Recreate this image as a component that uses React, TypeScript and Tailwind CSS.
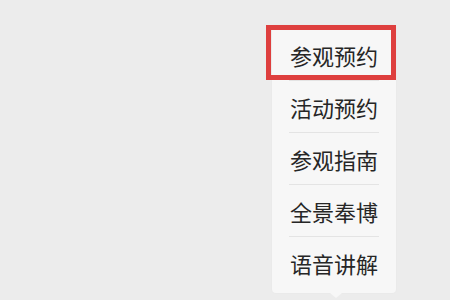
import React from 'react';

const items = ['参观预约', '活动预约', '参观指南', '全景奉博', '语音讲解'];

export default function App() {
  return (
    <div className="w-[450px] h-[300px] bg-[#ececec] flex justify-end pr-[54px] pt-[25px] overflow-hidden">
      <div className="relative w-[124px] h-[268px] bg-[#f7f7f7] rounded-[4px] py-1 shadow-[0_0_2px_rgba(0,0,0,0.04)]">
        {items.map((label, i) => (
          <div key={label} className="h-[52px] flex flex-col">
            <div className="flex-1 flex items-center pl-[18px] text-[22px] leading-none text-[#262626] font-['Noto_Sans_CJK_SC',sans-serif]">
              {label}
            </div>
            {i < items.length - 1 && <div className="mx-[17px] h-px bg-[#e4e4e4]" />}
          </div>
        ))}
        {/* little pointer under the menu */}
        <div className="absolute left-[58px] -bottom-[5px] w-0 h-0 border-l-[6px] border-r-[6px] border-t-[5px] border-l-transparent border-r-transparent border-t-[#f7f7f7]" />
        {/* red highlight box */}
        <div className="absolute -left-[6px] right-0 top-0 h-[55px] border-[5px] border-[#de3f3e]" />
      </div>
    </div>
  );
}
